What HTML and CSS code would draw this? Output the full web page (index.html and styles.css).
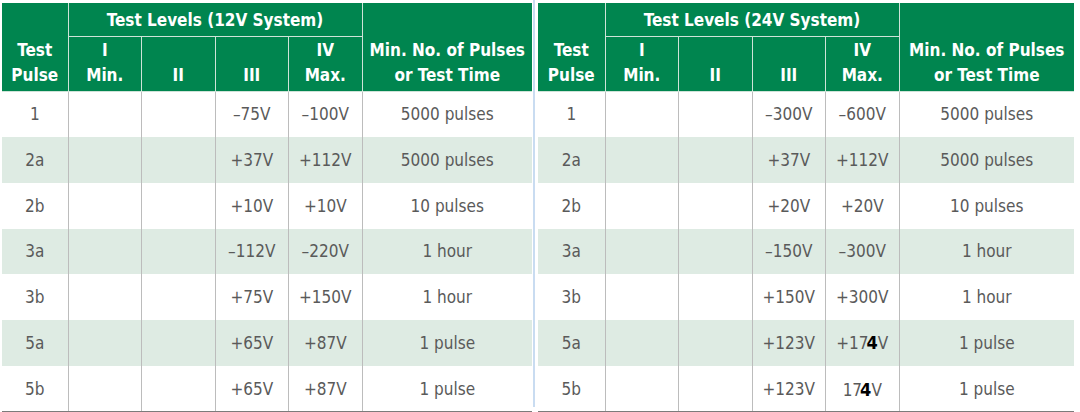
FILE: index.html
```html
<!DOCTYPE html>
<html>
<head>
<meta charset="utf-8">
<link rel="stylesheet" href="styles.css">
</head>
<body>
<div class="page">
  <div class="panel panel-left">
    <table class="tbl tbl-left">
      <colgroup>
        <col class="c-pulse"><col class="c-lvl"><col class="c-lvl"><col class="c-lvl"><col class="c-lvl"><col class="c-min">
      </colgroup>
      <thead>
        <tr class="h1">
          <th rowspan="2" class="hb">Test<br>Pulse</th>
          <th colspan="4" class="hm">Test Levels (12V System)</th>
          <th rowspan="2" class="hb last">Min. No. of Pulses<br>or Test Time</th>
        </tr>
        <tr class="h2">
          <th class="hb">I<br>Min.</th>
          <th class="hb">II</th>
          <th class="hb">III</th>
          <th class="hb">IV<br>Max.</th>
        </tr>
      </thead>
      <tbody>
        <tr><td>1</td><td></td><td></td><td>–75V</td><td>–100V</td><td>5000 pulses</td></tr>
        <tr class="alt"><td>2a</td><td></td><td></td><td>+37V</td><td>+112V</td><td>5000 pulses</td></tr>
        <tr><td>2b</td><td></td><td></td><td>+10V</td><td>+10V</td><td>10 pulses</td></tr>
        <tr class="alt"><td>3a</td><td></td><td></td><td>–112V</td><td>–220V</td><td>1 hour</td></tr>
        <tr><td>3b</td><td></td><td></td><td>+75V</td><td>+150V</td><td>1 hour</td></tr>
        <tr class="alt"><td>5a</td><td></td><td></td><td>+65V</td><td>+87V</td><td>1 pulse</td></tr>
        <tr class="end"><td>5b</td><td></td><td></td><td>+65V</td><td>+87V</td><td>1 pulse</td></tr>
      </tbody>
    </table>
  </div>
  <div class="panel panel-right">
    <table class="tbl tbl-right">
      <colgroup>
        <col class="c-pulse2"><col class="c-lvl"><col class="c-lvl"><col class="c-lvl"><col class="c-lvl"><col class="c-min2">
      </colgroup>
      <thead>
        <tr class="h1">
          <th rowspan="2" class="hb">Test<br>Pulse</th>
          <th colspan="4" class="hm">Test Levels (24V System)</th>
          <th rowspan="2" class="hb last">Min. No. of Pulses<br>or Test Time</th>
        </tr>
        <tr class="h2">
          <th class="hb">I<br>Min.</th>
          <th class="hb">II</th>
          <th class="hb">III</th>
          <th class="hb">IV<br>Max.</th>
        </tr>
      </thead>
      <tbody>
        <tr><td>1</td><td></td><td></td><td>–300V</td><td>–600V</td><td>5000 pulses</td></tr>
        <tr class="alt"><td>2a</td><td></td><td></td><td>+37V</td><td>+112V</td><td>5000 pulses</td></tr>
        <tr><td>2b</td><td></td><td></td><td>+20V</td><td>+20V</td><td>10 pulses</td></tr>
        <tr class="alt"><td>3a</td><td></td><td></td><td>–150V</td><td>–300V</td><td>1 hour</td></tr>
        <tr><td>3b</td><td></td><td></td><td>+150V</td><td>+300V</td><td>1 hour</td></tr>
        <tr class="alt"><td>5a</td><td></td><td></td><td>+123V</td><td>+17<span class="fix">4</span>V</td><td>1 pulse</td></tr>
        <tr class="end"><td>5b</td><td></td><td></td><td>+123V</td><td>17<span class="fix">4</span>V</td><td>1 pulse</td></tr>
      </tbody>
    </table>
  </div>
</div>
</body>
</html>
```
FILE: styles.css
```css
html, body {
  margin: 0;
  padding: 0;
  background: #ffffff;
}

.page {
  display: flex;
  width: 1080px;
  height: 412px;
  padding-left: 2px;
  box-sizing: border-box;
  font-family: "Liberation Sans Narrow", "DejaVu Sans Condensed", "Liberation Sans", sans-serif;
  font-stretch: condensed;
}

.panel {
  padding-top: 3px;
}

.panel-left {
  width: 530px;
  padding-right: 1px;
  border-right: 2px solid #c9dcf1;
  height: 404px;
}

.panel-right {
  margin-left: 3px;
  width: 536px;
}

.tbl {
  border-collapse: collapse;
  table-layout: fixed;
  width: 100%;
}

.tbl-left .c-pulse { width: 66px; }
.tbl-right .c-pulse2 { width: 67px; }
.c-lvl { width: 73.5px; }

.tbl th {
  background: #00854f;
  color: #ffffff;
  font-weight: bold;
  font-size: 17px;
  letter-spacing: 0;
  line-height: 25px;
  text-align: center;
  padding: 0 1px;
  white-space: nowrap;
  border: 1px solid #cfe3d8;
  border-top: 0;
}

.tbl th.hb {
  vertical-align: bottom;
  padding-bottom: 3px;
}

.tbl th.hm {
  vertical-align: middle;
  padding-top: 3px;
}

.tbl .h1 th:first-child {
  border-left: 0;
}

.tbl th.last {
  border-right: 0;
}

.tbl .h1 {
  height: 33px;
}

.tbl .h2 {
  height: 55px;
}

.tbl .h2 th {
  border-top: 1px solid #cfe3d8;
}

.tbl td {
  height: 45.7px;
  padding: 0;
  font-size: 17px;
  letter-spacing: 0;
  color: #5a5a5a;
  text-align: center;
  vertical-align: middle;
  border-left: 1.5px solid #bcbcbc;
  border-right: 1.5px solid #bcbcbc;
}

.tbl tr.end td {
  height: 43px;
  padding-top: 2px;
}

.tbl td:first-child {
  border-left: 0;
}

.tbl td:last-child {
  border-right: 0;
}

.tbl tr.alt td {
  background: #deebe3;
}

.tbl tbody tr:last-child td {
  border-bottom: 3px solid #7b7b7b;
}

.fix {
  color: #000000;
  font-weight: bold;
  font-size: 18px;
  margin-left: -2px;
}
```
